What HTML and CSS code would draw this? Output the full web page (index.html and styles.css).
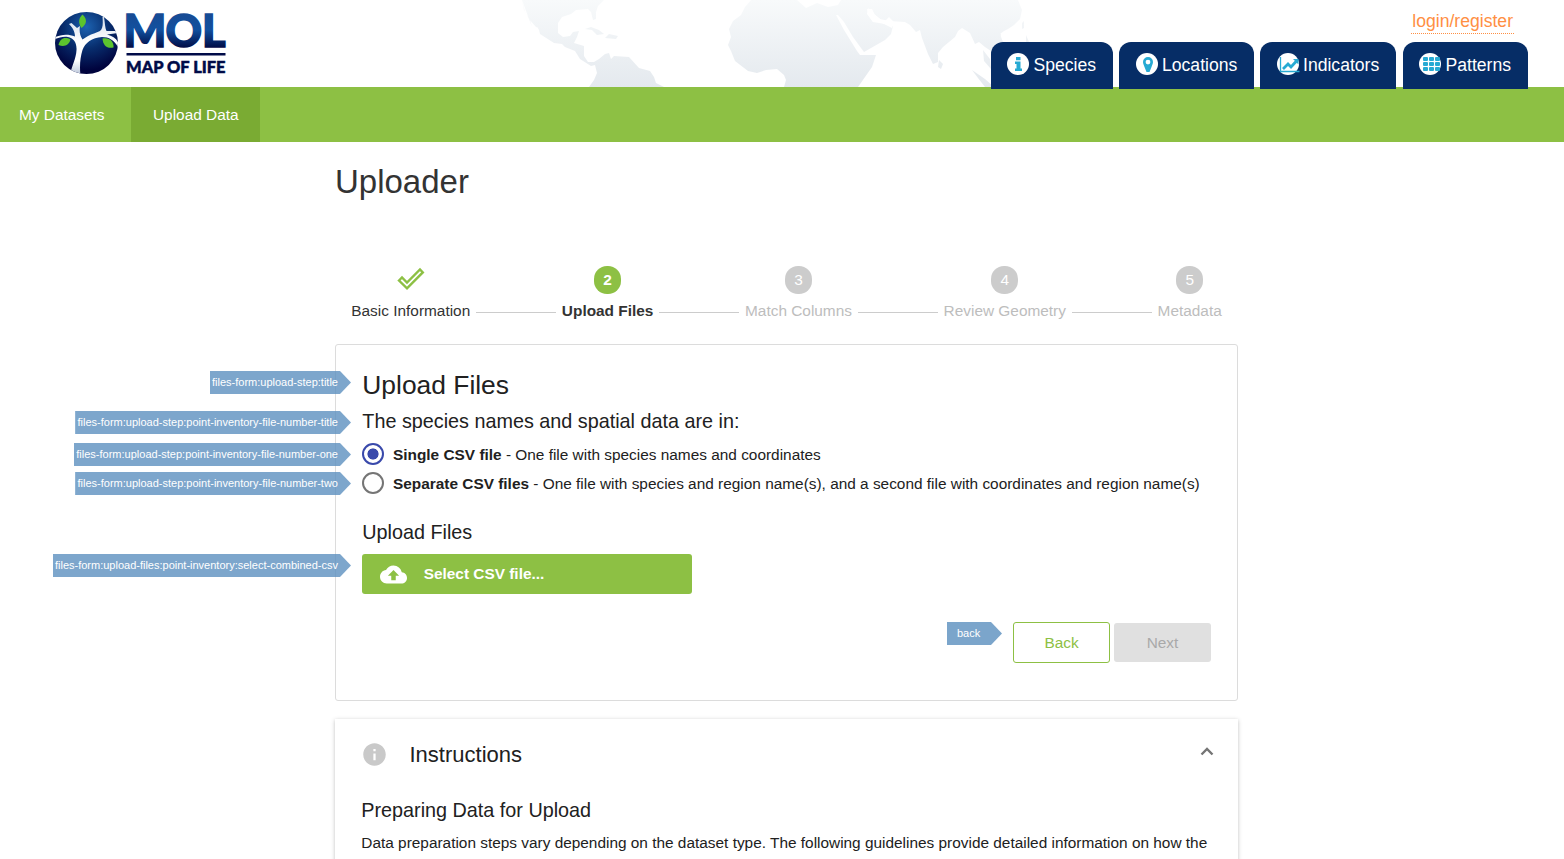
FILE: index.html
```html
<!DOCTYPE html>
<html lang="en">
<head>
<meta charset="utf-8">
<title>Map of Life - Uploader</title>
<link rel="stylesheet" href="styles.css">
</head>
<body>
<header class="header">
  <svg class="world" width="520" height="87" viewBox="520 0 520 87">
    <defs><linearGradient id="land" x1="0" y1="0" x2="0" y2="87" gradientUnits="userSpaceOnUse"><stop offset="0" stop-color="#f8fafb"/><stop offset="1" stop-color="#e4e9ee"/></linearGradient></defs>
    <g fill="url(#land)">
      <path d="M522 0 L525 12 530 20 532 27 M522 0 L604 0 598 6 596 12 596 19 593 20 591 12 588 9 576 10 571 14 562 17 558 23 558 33 563 37 570 36 573 32 579 31 577 37 574 43 584 46 584 56 588 62 594 62 599 59 605 54 609 53 611 59 614 56 629 57 639 68 650 71 654 77 656 83 664 87 589 87 594 80 597 73 595 65 591 66 580 59 575 51 565 47 562 44 554 43 540 34 539 30 534 21 529 14 527 6 529 6 532 16 539 28 536 27 529 19 524 10Z"/>
      <path d="M585 29 L591 27 599 30 604 34 597 35 592 30ZM605 38 L609 34 618 36 616 39Z"/>
      <path d="M751 0 L797 0 806 8 817 3 828 7 838 5 841 0 1018 0 1022 10 1020 19 1014 25 1008 29 1004 31 1000 34 1004 45 1010 58 1020 68 1015 64 1005 53 1001 65 1009 78 1001 72 995 62 991 51 985 47 979 42 975 44 970 33 962 28 958 31 955 37 943 47 938 53 938 62 933 64 928 54 922 38 920 30 916 32 910 25 905 22 889 21 880 19 875 15 872 9 867 9 868 14 873 22 885 24 893 26 891 34 885 40 864 52 861 48 853 37 844 22 838 15 836 15 844 30 857 51 860 55 876 55 872 67 858 87 784 87 786 80 784 75 777 69 766 70 757 73 748 71 735 61 731 51 728 45 731 37 729 29 733 21 741 15 745 7Z"/>
      <path d="M939 60 L943 64 941 69 938 67ZM993 35 L999 31 1001 35 997 40ZM1022 23 L1024 21 1024 28 1022 29ZM1026 35 L1029 42 1026 42ZM972 70 L985 79 994 87 985 87 978 78ZM983 50 L990 59 991 69 984 61Z"/>
      <path d="M868 8 L874 14 884 22 889 17 894 22 892 28 880 22 873 22 867 14Z" fill="#fff"/>
    </g>
  </svg>
  <svg class="logo" width="174" height="66" viewBox="54 10 174 66">
    <defs>
      <radialGradient id="globe" cx=".5" cy=".24" r=".7"><stop offset="0" stop-color="#1c62b1"/><stop offset=".5" stop-color="#082e6e"/><stop offset="1" stop-color="#00033d"/></radialGradient>
      <linearGradient id="mol" x1="0" y1="14" x2="0" y2="49" gradientUnits="userSpaceOnUse"><stop offset="0" stop-color="#174b94"/><stop offset=".45" stop-color="#11509f"/><stop offset="1" stop-color="#00073f"/></linearGradient>
      <linearGradient id="trunk" x1="0" y1="20" x2="0" y2="74" gradientUnits="userSpaceOnUse"><stop offset="0" stop-color="#d9e2ee"/><stop offset=".4" stop-color="#fff"/><stop offset=".75" stop-color="#fff"/><stop offset="1" stop-color="#bcc7da"/></linearGradient>
      <clipPath id="disc"><ellipse cx="86.500" cy="43" rx="31.500" ry="31"/></clipPath>
    </defs>
    <ellipse cx="86.500" cy="43" rx="31.500" ry="31" fill="url(#globe)"/>
    <g clip-path="url(#disc)" fill="url(#trunk)">
      <path d="M70 75 C72 65 76 59 76.500 50 C77 42 73 38 68 37 C64 36 59 37.500 55 39 L55 37 C61 34.500 68 33.500 75 36.500 C75 31 72 27 69 24 L71.500 23 L77 28 L80 26 C79 31 80 36 82.500 39.500 C86 37 90 34.500 94 33.500 L100 31 C103 28 103 24 102.500 17 L104 17 C105 23 105 28 106.500 31 L117 31 118 33 L107 34.500 C113 36 117 39 119 44 L118 47 C114 40 109 37 102 37 C92 37.500 85 43 82.500 50 C80 58 79.500 67 80.500 75Z"/>
    </g>
    <g fill="#5cc42e"><path d="M82.500 14.500C87.500 19 87 24 81.500 28C78 23 78.500 18 82.500 14.500Z"/><path d="M58.500 45C60 38 65 36.500 70.500 39.500C69 45 64.500 47.500 58.500 45Z"/><path d="M102.500 38.500C109 37 114 41 113.500 47.500C107 49 103 45.500 102.500 38.500Z"/></g>
    <text class="logo-mol" x="123.500 165.500 202" y="47">MOL</text>
    <path d="M126.500 53h99v2.600h-99z" fill="#000b48"/>
    <text class="logo-name" x="126" y="72.500" textLength="99.500" lengthAdjust="spacingAndGlyphs">MAP OF LIFE</text>
  </svg>
  <div class="header-right">
    <a class="login">login/register</a>
    <nav class="tabs">
      <a class="tab species"><svg width="22" height="22" viewBox="0 0 22 22"><circle cx="11" cy="11" r="11" fill="#fff"/><path d="M9 4h4.500v3.200H9zM8 8.500h5.500v7H15V18H8v-2.500h1.500V11H8z" fill="#27aad3"/></svg>Species</a>
      <a class="tab locations"><svg width="22" height="22" viewBox="0 0 22 22"><circle cx="11" cy="11" r="11" fill="#fff"/><path fill-rule="evenodd" d="M12 4a5 5 0 0 1 5 5c0 2-1 3-1.500 5l-2 5h-3l-2-5c-.5-2-1.500-3-1.500-5a5 5 0 0 1 5-5Zm0 2.700a2.400 2.400 0 1 0 0 4.800 2.400 2.400 0 0 0 0-4.800Z" fill="#27aad3"/></svg>Locations</a>
      <a class="tab indicators"><svg width="22" height="22" viewBox="0 0 22 22" overflow="visible"><circle cx="11" cy="11" r="11" fill="#fff"/><path d="M3.500 4v14.500h19" fill="none" stroke="#27aad3" stroke-width="1.300"/><path d="M6 16l5-5 3 3 6-6.500" fill="none" stroke="#27aad3" stroke-width="2.800"/><path d="M16 6h5.500v5.500z" fill="#27aad3"/></svg>Indicators</a>
      <a class="tab patterns"><svg width="22" height="22" viewBox="0 0 22 22"><circle cx="11" cy="11" r="11" fill="#fff"/><g fill="#27aad3"><rect x="4" y="4" width="5" height="4" rx="1"/><rect x="10" y="4" width="5" height="4" rx="1"/><rect x="16" y="4" width="5" height="4" rx="1"/><rect x="4" y="9" width="5" height="4" rx="1"/><rect x="10" y="9" width="5" height="4" rx="1"/><rect x="16" y="9" width="5" height="4" rx="1"/><rect x="4" y="14" width="5" height="4" rx="1"/><rect x="10" y="14" width="5" height="4" rx="1"/><rect x="16" y="14" width="5" height="4" rx="1"/></g></svg>Patterns</a>
    </nav>
  </div>
</header>
<nav class="subnav"><a class="sub">My Datasets</a><a class="sub active">Upload Data</a></nav>
<main class="main">
  <h1 class="title">Uploader</h1>
  <div class="steps">
    <div class="step done"><svg class="check" width="28" height="28" viewBox="0 0 28 28"><path d="M2 14.500L5 11.500 10 16.500 23 3.500 25.800 6.400 10 22.300Z" fill="none" stroke="#8dc044" stroke-width="2.400"/></svg>Basic Information</div>
    <i class="line"></i>
    <div class="step current"><b class="num">2</b>Upload Files</div>
    <i class="line"></i>
    <div class="step"><span class="num">3</span>Match Columns</div>
    <i class="line"></i>
    <div class="step"><span class="num">4</span>Review Geometry</div>
    <i class="line"></i>
    <div class="step"><span class="num">5</span>Metadata</div>
  </div>
  <section class="card">
    <div class="anchor"><h2 class="card-title">Upload Files</h2><span class="tag tag-title">files-form:upload-step:title</span></div>
    <div class="anchor"><h3 class="question">The species names and spatial data are in:</h3><span class="tag tag-question">files-form:upload-step:point-inventory-file-number-title</span></div>
    <div class="options">
      <div class="anchor option"><i class="radio on"></i><span class="label"><b>Single CSV file</b> - One file with species names and coordinates</span><span class="tag tag-option">files-form:upload-step:point-inventory-file-number-one</span></div>
      <div class="anchor option"><i class="radio"></i><span class="label"><b>Separate CSV files</b> - One file with species and region name(s), and a second file with coordinates and region name(s)</span><span class="tag tag-option">files-form:upload-step:point-inventory-file-number-two</span></div>
    </div>
    <h3 class="files">Upload Files</h3>
    <div class="anchor"><div class="select"><svg width="27" height="27" viewBox="0 0 24 24"><path fill="#fff" d="M19.350 10.040C18.670 6.590 15.640 4 12 4 9.110 4 6.600 5.640 5.350 8.040 2.340 8.360 0 10.910 0 14c0 3.310 2.690 6 6 6h13c2.760 0 5-2.240 5-5 0-2.640-2.050-4.780-4.650-4.960zM14 13v4h-4v-4H7l5-5 5 5h-3z"/></svg>Select CSV file...</div><span class="tag tag-select">files-form:upload-files:point-inventory:select-combined-csv</span></div>
    <div class="actions"><span class="tag-back">back</span><a class="btn back">Back</a><a class="btn next">Next</a></div>
  </section>
  <section class="panel">
    <div class="panel-head"><svg width="27" height="27" viewBox="0 0 24 24"><path fill="#c9c9c9" d="M12 2C6.480 2 2 6.480 2 12s4.480 10 10 10 10-4.480 10-10S17.520 2 12 2zm1 15h-2v-6h2v6zm0-8h-2V7h2v2z"/></svg><span>Instructions</span><svg class="chev" width="14" height="9" viewBox="0 0 14 9"><path d="M1.500 7.500L7 2l5.500 5.500" fill="none" stroke="#757575" stroke-width="2.400"/></svg></div>
    <h3 class="prep">Preparing Data for Upload</h3>
    <p class="text">Data preparation steps vary depending on the dataset type. The following guidelines provide detailed information on how the</p>
  </section>
</main>
</body>
</html>
```
FILE: styles.css
```css
* { box-sizing: border-box; }
body { margin: 0; height: 859px; overflow: hidden; background: #fff; color: #212121; font: 15.4px/20px "Liberation Sans", Arial, sans-serif; }
h1, h2, h3, p { margin: 0; font-weight: 400; }
svg { display: block; flex: none; }

.header { position: relative; z-index: 1; display: flex; justify-content: space-between; height: 87px; padding: 0 36px 0 54px; }
.world { position: absolute; left: 520px; top: 0; z-index: -1; }
.logo { margin-top: 10px; overflow: visible; }
.logo-mol { font: 900 45px Lato, sans-serif; fill: url(#mol); stroke: url(#mol); stroke-width: 1.600; }
.logo-name { font: 900 17px Lato, sans-serif; fill: #000b48; stroke: #000b48; stroke-width: .5; }
.header-right { display: flex; flex-direction: column; align-items: flex-end; }
.login { flex: none; height: 24px; margin: 10px 14px 8px 0; padding: 0 1px; color: #ff8f43; font-size: 17.6px; line-height: 22px; border-bottom: 1px dotted #ff8f43; }
.tabs { display: flex; flex: none; gap: 6px; }
.tab { display: flex; gap: 4.500px; height: 47px; padding: 11px 0 0 16px; border-radius: 12px 12px 0 0; background: #062d66; color: #fff; font-size: 17.6px; line-height: 24px; white-space: nowrap; }
.species { width: 122px; }
.locations { width: 135px; padding-left: 17px; gap: 4px; }
.indicators { width: 136px; padding-left: 17px; gap: 4px; }
.patterns { width: 125px; margin-left: 1px; }

.subnav { display: flex; height: 55px; background: #8dc044; color: #fff; line-height: 55px; }
.sub { width: 131px; padding-left: 19px; }
.sub.active { width: 129px; padding-left: 22px; background: #7aab33; }

.main { width: 903px; margin-left: 335px; }
.title { padding-top: 20px; font-size: 33px; line-height: 40px; color: #333; }
.steps { display: flex; justify-content: space-between; width: 870.500px; margin: 64px 0 0 16.300px; height: 78px; color: #bdbdbd; white-space: nowrap; }
.step { display: flex; flex-direction: column; align-items: center; }
.done, .current { color: #333; }
.current { font-weight: 700; }
.check { margin-bottom: 7px; }
.num { width: 27px; height: 28px; margin-bottom: 7px; border-radius: 13px; background: #ccc; color: #fff; text-align: center; line-height: 28px; }
.current .num { background: #8dc044; }
.line { width: 80.500px; height: 1px; margin-top: 46px; background: #ccc; }

.card { height: 357px; padding: 25px 26px 0; border: 1px solid #dcdcdc; border-radius: 3px; }
.anchor { position: relative; }
.card-title { padding-left: .3px; font-size: 26.4px; line-height: 30px; }
.question { padding: 9px 0 0 .3px; font-size: 19.8px; line-height: 24px; }
.options { padding-top: 6px; }
.option { display: flex; align-items: center; gap: 9px; height: 29px; white-space: nowrap; }
.label { padding-top: 2px; }
.radio { width: 22px; height: 22px; border: 2px solid #757575; border-radius: 50%; }
.radio.on { border-color: #3949ab; background: radial-gradient(circle, #3949ab 5.200px, #fff 5.900px); }
.files { padding: 23px 0 10px .3px; font-size: 19.8px; line-height: 24px; }
.select { display: flex; align-items: center; gap: 16.700px; width: 330px; height: 40px; padding-left: 18px; border-radius: 3px; background: #8dc044; color: #fff; font-weight: 700; }
.tag, .tag-back { height: 23px; background: #7ba5cb; color: #fff; font-size: 11px; line-height: 22px; white-space: nowrap; clip-path: polygon(0 0, calc(100% - 11px) 0, 100% 50%, calc(100% - 11px) 100%, 0 100%); }
.tag { position: absolute; right: calc(100% + 11px); padding: 0 13px 0 2.400px; background: rgba(92, 144, 191, .8); }
.tag-title { top: 1px; }
.tag-question { top: 11px; }
.tag-option { top: 4px; }
.tag-select { top: 0; }
.actions { display: flex; justify-content: flex-end; align-items: center; height: 41px; margin-top: 28px; }
.tag-back { align-self: flex-start; width: 55px; margin-right: 11px; padding-left: 10px; }
.btn { width: 97px; height: 39px; border-radius: 3px; line-height: 39px; text-align: center; }
.back { height: 41px; margin-right: 4px; border: 1px solid #8dc044; color: #8dc044; }
.next { background: #e0e0e0; color: #a9a9a9; }

.panel { height: 180px; margin-top: 18px; padding: 0 26px; box-shadow: 0 1px 4px rgba(0, 0, 0, .25); }
.panel-head { display: flex; align-items: center; height: 70px; font-size: 22px; line-height: 26px; }
.panel-head span { margin-left: 21.500px; padding-top: 2px; }
.chev { margin: -6px -2px 0 auto; }
.prep { padding: 9px 0 0 .3px; font-size: 19.8px; line-height: 24px; }
.text { margin-top: 11px; padding-left: .3px; white-space: nowrap; }
```
